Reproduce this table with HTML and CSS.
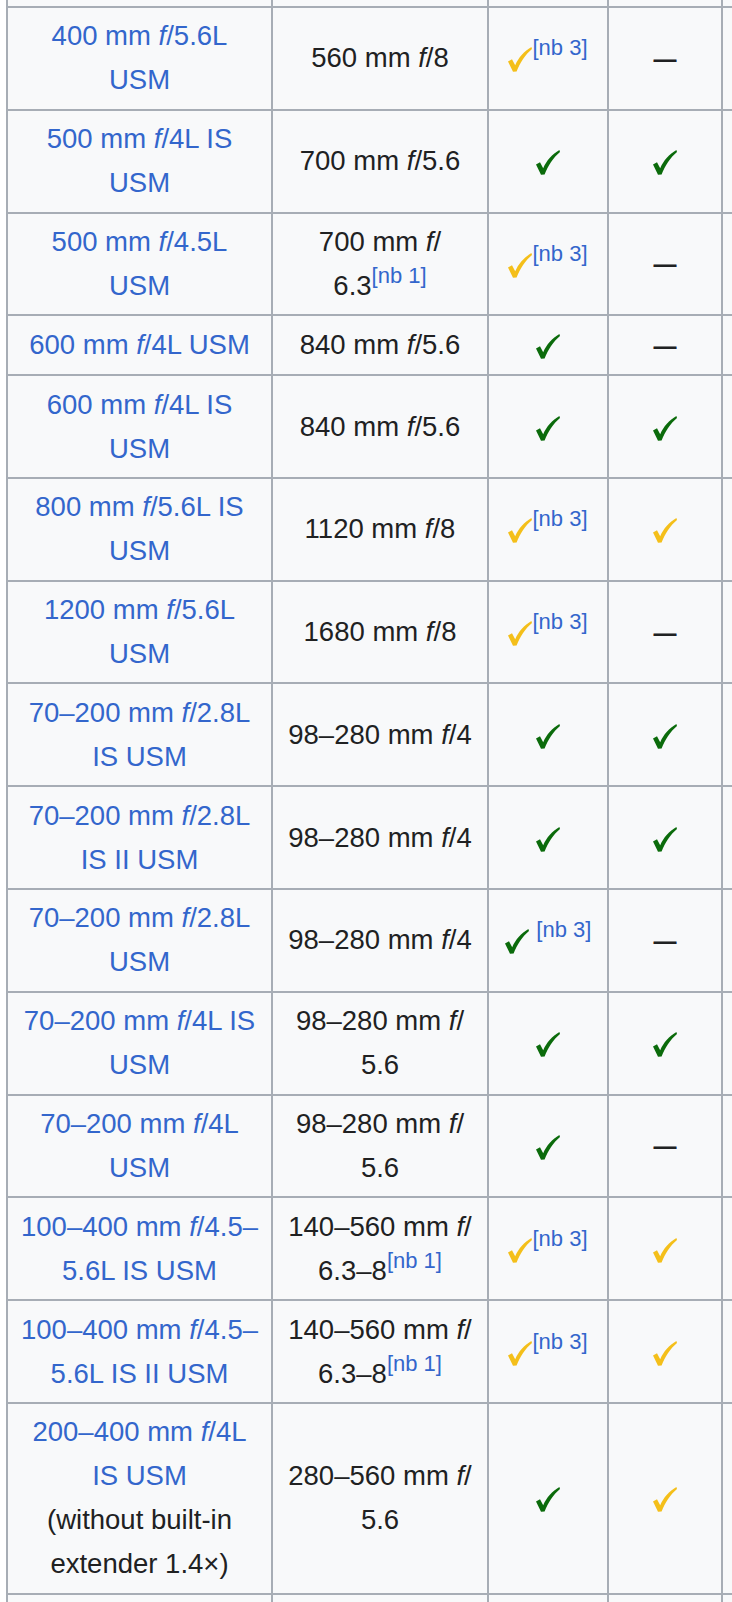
FILE: index.html
```html
<!DOCTYPE html>
<html>
<head>
    <title>Extender compatibility</title>
    <link rel="stylesheet" href="styles.css">
</head>
<body>
    <svg width="0" height="0" class="defs">
        <symbol id="tick" viewBox="0 0 24 25">
            <path d="M0 14.5 L4 12.2 L7.2 18.2 C10.6 10.4 16.2 4.2 23.4 0 L24 2 C17.4 7.6 12 15.4 8.6 24.6 L5 24.8 Z"/>
        </symbol>
    </svg>

    <table class="lenses">
        <colgroup>
            <col class="c-lens">
            <col class="c-eff">
            <col class="c-af">
            <col class="c-is">
            <col class="c-more">
        </colgroup>
        <tr class="cut"><td></td><td></td><td></td><td></td><td></td></tr>

        <tr>
            <td><a href="#">400 mm <i>f</i>/5.6L USM</a></td>
            <td>560 mm <i>f</i>/<wbr>8</td>
            <td><svg class="tick part"><use href="#tick"/></svg><sup class="ref">[nb 3]</sup></td>
            <td><span class="no">—</span></td>
            <td></td>
        </tr>
        <tr>
            <td><a href="#">500 mm <i>f</i>/4L IS USM</a></td>
            <td>700 mm <i>f</i>/<wbr>5.6</td>
            <td><svg class="tick yes"><use href="#tick"/></svg></td>
            <td><svg class="tick yes"><use href="#tick"/></svg></td>
            <td></td>
        </tr>
        <tr>
            <td><a href="#">500 mm <i>f</i>/4.5L USM</a></td>
            <td>700 mm <i>f</i>/<wbr>6.3<sup class="ref">[nb 1]</sup></td>
            <td><svg class="tick part"><use href="#tick"/></svg><sup class="ref">[nb 3]</sup></td>
            <td><span class="no">—</span></td>
            <td></td>
        </tr>
        <tr>
            <td><a href="#">600 mm <i>f</i>/4L USM</a></td>
            <td>840 mm <i>f</i>/<wbr>5.6</td>
            <td><svg class="tick yes"><use href="#tick"/></svg></td>
            <td><span class="no">—</span></td>
            <td></td>
        </tr>
        <tr>
            <td><a href="#">600 mm <i>f</i>/4L IS USM</a></td>
            <td>840 mm <i>f</i>/<wbr>5.6</td>
            <td><svg class="tick yes"><use href="#tick"/></svg></td>
            <td><svg class="tick yes"><use href="#tick"/></svg></td>
            <td></td>
        </tr>
        <tr>
            <td><a href="#">800 mm <i>f</i>/5.6L IS USM</a></td>
            <td>1120 mm <i>f</i>/<wbr>8</td>
            <td><svg class="tick part"><use href="#tick"/></svg><sup class="ref">[nb 3]</sup></td>
            <td><svg class="tick part"><use href="#tick"/></svg></td>
            <td></td>
        </tr>
        <tr>
            <td><a href="#">1200 mm <i>f</i>/5.6L USM</a></td>
            <td>1680 mm <i>f</i>/<wbr>8</td>
            <td><svg class="tick part"><use href="#tick"/></svg><sup class="ref">[nb 3]</sup></td>
            <td><span class="no">—</span></td>
            <td></td>
        </tr>
        <tr>
            <td><a href="#">70–200 mm <i>f</i>/2.8L IS USM</a></td>
            <td>98–280 mm <i>f</i>/<wbr>4</td>
            <td><svg class="tick yes"><use href="#tick"/></svg></td>
            <td><svg class="tick yes"><use href="#tick"/></svg></td>
            <td></td>
        </tr>
        <tr>
            <td><a href="#">70–200 mm <i>f</i>/2.8L IS II USM</a></td>
            <td>98–280 mm <i>f</i>/<wbr>4</td>
            <td><svg class="tick yes"><use href="#tick"/></svg></td>
            <td><svg class="tick yes"><use href="#tick"/></svg></td>
            <td></td>
        </tr>
        <tr>
            <td><a href="#">70–200 mm <i>f</i>/2.8L USM</a></td>
            <td>98–280 mm <i>f</i>/<wbr>4</td>
            <td><svg class="tick yes"><use href="#tick"/></svg> <sup class="ref">[nb 3]</sup></td>
            <td><span class="no">—</span></td>
            <td></td>
        </tr>
        <tr>
            <td><a href="#">70–200 mm <i>f</i>/4L IS USM</a></td>
            <td>98–280 mm <i>f</i>/<wbr>5.6</td>
            <td><svg class="tick yes"><use href="#tick"/></svg></td>
            <td><svg class="tick yes"><use href="#tick"/></svg></td>
            <td></td>
        </tr>
        <tr>
            <td><a href="#">70–200 mm <i>f</i>/4L USM</a></td>
            <td>98–280 mm <i>f</i>/<wbr>5.6</td>
            <td><svg class="tick yes"><use href="#tick"/></svg></td>
            <td><span class="no">—</span></td>
            <td></td>
        </tr>
        <tr>
            <td><a href="#">100–400 mm <i>f</i>/4.5–5.6L IS USM</a></td>
            <td>140–560 mm <i>f</i>/<wbr>6.3–8<sup class="ref">[nb 1]</sup></td>
            <td><svg class="tick part"><use href="#tick"/></svg><sup class="ref">[nb 3]</sup></td>
            <td><svg class="tick part"><use href="#tick"/></svg></td>
            <td></td>
        </tr>
        <tr>
            <td><a href="#">100–400 mm <i>f</i>/4.5–5.6L IS II USM</a></td>
            <td>140–560 mm <i>f</i>/<wbr>6.3–8<sup class="ref">[nb 1]</sup></td>
            <td><svg class="tick part"><use href="#tick"/></svg><sup class="ref">[nb 3]</sup></td>
            <td><svg class="tick part"><use href="#tick"/></svg></td>
            <td></td>
        </tr>
        <tr>
            <td><a href="#">200–400 mm <i>f</i>/4L IS USM</a><br>(without built-in extender 1.4×)</td>
            <td>280–560 mm <i>f</i>/<wbr>5.6</td>
            <td><svg class="tick yes"><use href="#tick"/></svg></td>
            <td><svg class="tick part"><use href="#tick"/></svg></td>
            <td></td>
        </tr>

        <tr class="next"><td></td><td></td><td></td><td></td><td></td></tr>
    </table>
</body>
</html>
```

FILE: styles.css
```css
html,
body {
    overflow: hidden;
}

body {
    margin: 0;
    background-color: #ffffff;
    font-family: "Liberation Sans", Arial, sans-serif;
    font-size: 27.5px;
    color: #202122;
}

.defs {
    position: absolute;
}

.lenses {
    border-collapse: collapse;
    table-layout: fixed;
    width: 915px;
    margin-left: 6px;
    background-color: #f8f9fa;
}

.c-lens { width: 265px; }
.c-eff { width: 216px; }
.c-af { width: 120px; }
.c-is { width: 114px; }
.c-more { width: 200px; }

.lenses td {
    border: 2px solid #a7adb5;
    padding: 6.4px 11.25px;
    line-height: 44px;
    text-align: center;
    vertical-align: middle;
}

.lenses tr.cut td {
    border-top: 0;
    height: 6px;
    padding: 0;
    line-height: 0;
}

.lenses tr.next td {
    border-bottom: 0;
    height: 30px;
    padding: 0;
}

a {
    color: #3366cc;
    text-decoration: none;
}

.ref {
    font-size: 80%;
    line-height: 1;
    color: #3366cc;
    white-space: nowrap;
    vertical-align: 12px;
}

.tick {
    width: 24px;
    height: 25px;
    vertical-align: -5px;
}

.tick.yes {
    fill: #0b6b0b;
}

.tick.part {
    fill: #f4bf1a;
}

.no {
    font-weight: bold;
    font-size: 23px;
}
```
